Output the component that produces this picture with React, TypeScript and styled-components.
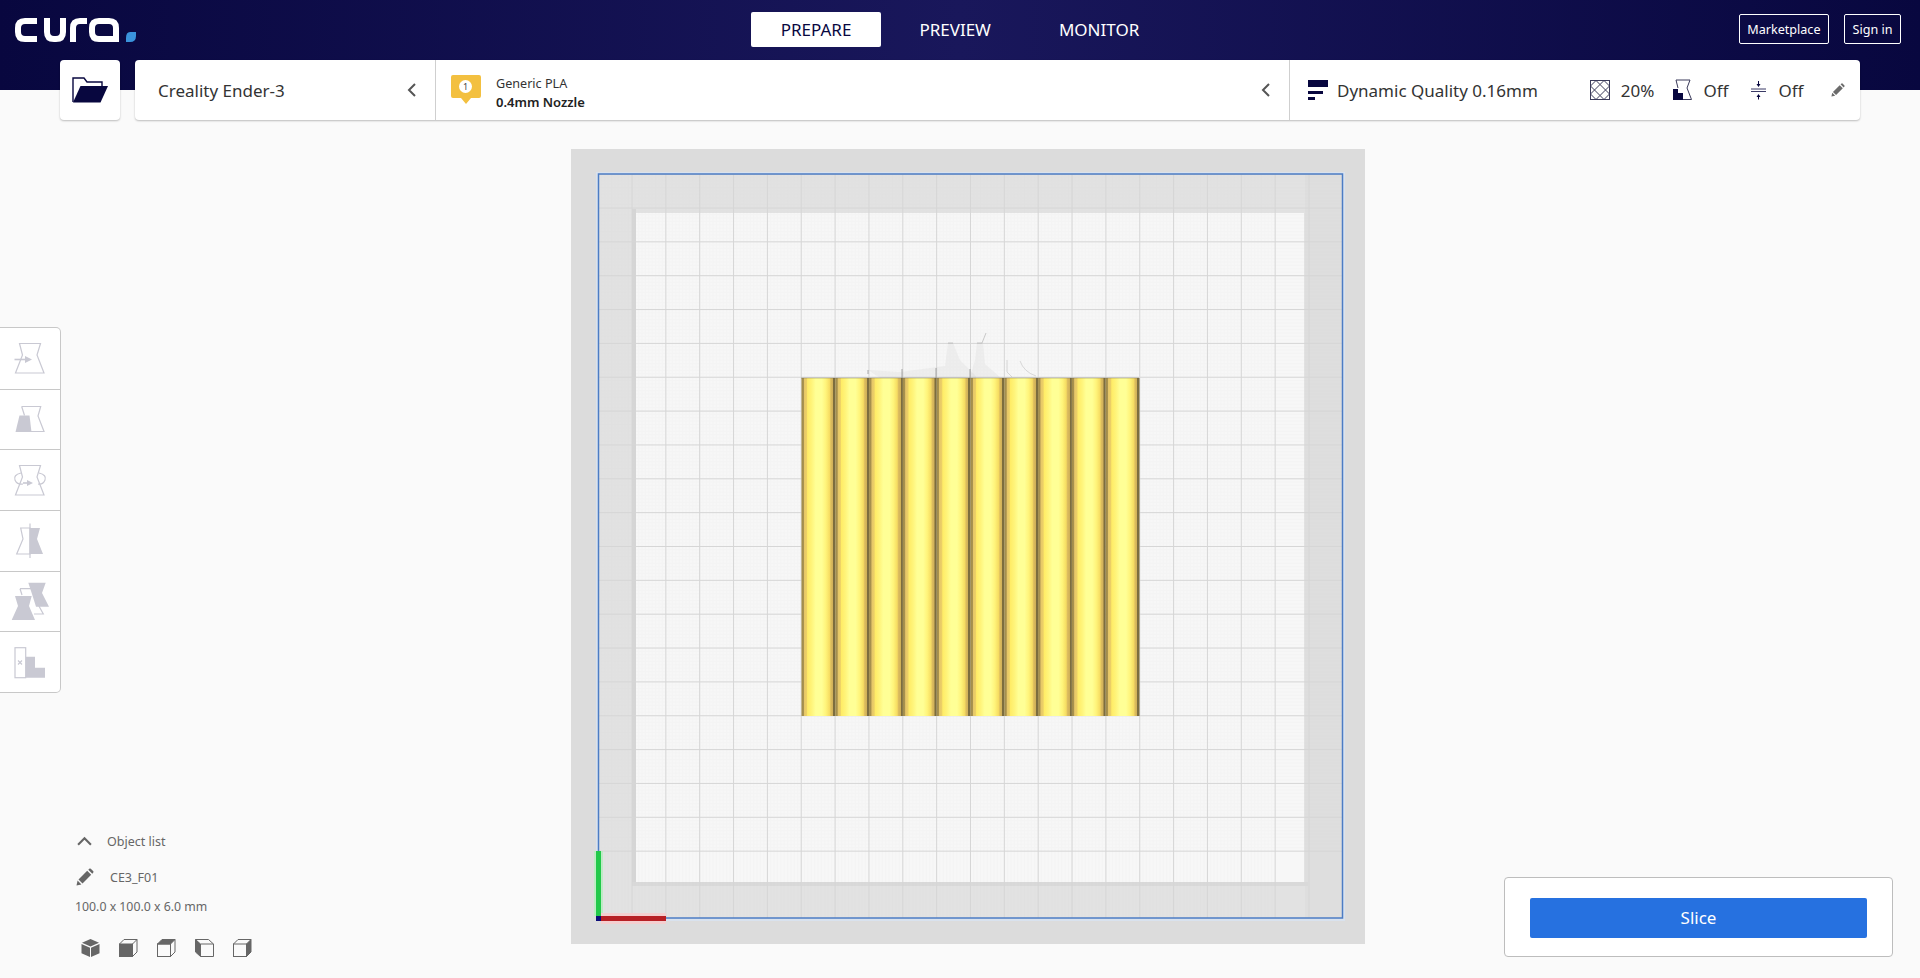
import React from 'react'
import styled, { createGlobalStyle } from 'styled-components'

const NAVY = '#08073f'
const TOOL = '#c9c9d3'
const CUBE = '#666666'

const GlobalStyle = createGlobalStyle`
    html, body { margin: 0; padding: 0; background: #fafafa; }
    body { font-family: "Noto Sans", "Open Sans", sans-serif; }
`

const Chevron: React.FC<{ up?: boolean; size?: number; color?: string }> = ({ up, size = 14, color = '#555' }) => (
    <svg width={size} height={size} viewBox="0 0 14 14" fill="none" stroke={color} strokeWidth="2">
        <path d={up ? 'M1 10 L7 4 L13 10' : 'M10 1 L4 7 L10 13'} />
    </svg>
)

const Pencil: React.FC<{ size: number; color: string }> = ({ size, color }) => (
    <svg width={size} height={size} viewBox="0 0 18 18" fill={color}>
        <path d="M0.5 17.5 L1.6 12.6 L5.4 16.4 Z" />
        <path d="M2.5 11.5 L11.2 2.8 L15.2 6.8 L6.5 15.5 Z" />
        <path d="M12.3 1.7 L13.6 0.6 Q14.2 0.2 14.8 0.7 L17.3 3.2 Q17.8 3.8 17.3 4.4 L16.3 5.7 Z" />
    </svg>
)

const Logo = () => (
    <svg width="121" height="24" viewBox="0 0 121 24" fill="none" stroke="#fff" strokeWidth="6">
        <path d="M22 3 H10 Q3 3 3 10 V14 Q3 21 10 21 H22" />
        <path d="M32 0 V14 Q32 21 39 21 H41 Q48 21 48 14 V0" />
        <path d="M58 24 V10 Q58 3 65 3 H72" />
        <path d="M101 24 V10 Q101 3 94 3 H84 Q77 3 77 10 V14 Q77 21 84 21 H101" />
        <path d="M115 14 H121 V18 Q121 24 115 24 H111 V20 Q111 14 115 14 Z" fill="#3a93dc" stroke="none" />
    </svg>
)

const Folder = () => (
    <svg width="36" height="26" viewBox="0 0 36 26" fill="none">
        <path d="M1 25 V1 H12 L15 5 H30 V9" stroke={NAVY} strokeWidth="1.4" />
        <path d="M1 25.500 L8.500 9 H36 L28.500 25.500 Z" fill={NAVY} />
    </svg>
)

const Badge = () => (
    <svg width="30" height="30" viewBox="0 0 30 30">
        <path d="M2 0 H28 Q30 0 30 2 V21 Q30 23 28 23 H20 L15 29 L10 23 H2 Q0 23 0 21 V2 Q0 0 2 0 Z" fill="#f3c040" />
        <circle cx="14.500" cy="11.500" r="6.500" fill="#fff" />
        <text x="14.500" y="14.800" textAnchor="middle" fontSize="9" fontFamily="Noto Sans" fill="#444">1</text>
    </svg>
)

const QualityIcon = () => (
    <svg width="20" height="20" viewBox="0 0 20 20" fill={NAVY}>
        <rect x="0" y="0" width="20" height="7" />
        <rect x="0" y="11" width="15" height="3" />
        <rect x="0" y="17" width="7" height="3" />
    </svg>
)

const InfillIcon = () => (
    <svg width="20" height="20" viewBox="0 0 20 20" fill="none" stroke="#3a3a5a" strokeWidth="1">
        <rect x="0.500" y="0.500" width="19" height="19" />
        <path d="M0.500 6 L6 0.500 L10 4.500 L14 0.500 L19.500 6 L15.500 10 L19.500 14 L14 19.500 L10 15.500 L6 19.500 L0.500 14 L4.500 10 Z M10 4.500 L15.500 10 L10 15.500 L4.500 10 Z" />
    </svg>
)

const SupportIcon = () => (
    <svg width="20" height="22" viewBox="0 0 20 22">
        <path d="M4 1 H18 L15 9 L19.500 20.500 H11" fill="none" stroke="#3a3a5a" strokeWidth="1" />
        <path d="M1 10 H6 V14 H11 V21 H1 Z" fill={NAVY} />
        <path d="M4 1 L6 9" stroke="#3a3a5a" strokeWidth="1" />
    </svg>
)

const AdhesionIcon = () => (
    <svg width="17" height="20" viewBox="0 0 17 20" fill={NAVY} stroke={NAVY}>
        <path d="M1 9 H16 M1 11.500 H16" fill="none" strokeWidth="0.800" />
        <path d="M8.500 1 V5 M8.500 15.500 V19.500" fill="none" strokeWidth="1" />
        <path d="M6.500 4 H10.500 L8.500 7 Z M6.500 17 H10.500 L8.500 14 Z" stroke="none" />
    </svg>
)

const ToolSvg: React.FC<{ children: React.ReactNode }> = ({ children }) => (
    <svg width="40" height="40" viewBox="0 0 40 40" fill="none" stroke={TOOL} strokeWidth="1.2">
        {children}
    </svg>
)

const toolIcons = [
    <ToolSvg key="move">
        <path d="M9.500 5.500 H30.500 L27 17 L34 35 H5.500 L12.500 17 Z" />
        <path d="M4.500 21.500 H16" strokeWidth="1.600" />
        <path d="M15 18 L22 21.500 L15 25 Z" fill={TOOL} stroke="none" />
    </ToolSvg>,
    <ToolSvg key="scale">
        <path d="M11.700 7.500 H30.700 L28 17 L34 32.500 H21" />
        <path d="M11.700 7.500 L14.500 16.500" />
        <path d="M9.500 16.500 H19.500 L21.500 33 H5.500 Z" fill={TOOL} stroke="none" />
    </ToolSvg>,
    <ToolSvg key="rotate">
        <path d="M9.500 5.500 H30.500 L27 17 L34 35 H5.500 L12.500 17 Z" />
        <path d="M11 13 Q3 15 5 20 Q7 25 13 24 M29 13 Q37 15 35 20 Q33 25 28 24" />
        <path d="M13 23 H18" strokeWidth="1.600" />
        <path d="M17 20 L23 23 L17 26 Z" fill={TOOL} stroke="none" />
    </ToolSvg>,
    <ToolSvg key="mirror">
        <path d="M10.700 7 H20 V33 H6.700 L13 18 Z" />
        <path d="M20 7 H30 L27 18 L33 33 H20 Z" fill={TOOL} stroke="none" />
        <path d="M20 2.500 V37" />
    </ToolSvg>,
    <ToolSvg key="per-model">
        <path d="M18.300 1.700 H35.700 L32 12 L39 25.700 H26 L22 13 Z" fill={TOOL} stroke="none" />
        <path d="M10 7.700 H27.300 L25 18 L33.300 33 H24 M10 7.700 L12 14" />
        <path d="M5 15 H21.700 L19 25 L25 39 H1.700 L8 25 Z" fill={TOOL} stroke="none" />
    </ToolSvg>,
    <ToolSvg key="blocker">
        <rect x="5" y="5.700" width="10.700" height="30" />
        <path d="M15.700 14.700 H25 V25.700 H35 V35.700 H15.700 Z" fill={TOOL} stroke="none" />
        <path d="M8 18.500 L12 22.500 M12 18.500 L8 22.500" />
    </ToolSvg>,
]

const CubeBase: React.FC<{ children?: React.ReactNode }> = ({ children }) => (
    <svg width="19" height="18" viewBox="0 0 19 18" fill="none" stroke={CUBE} strokeWidth="1">
        {children}
    </svg>
)

const cubeIcons = [
    <svg key="3d" width="19" height="18" viewBox="0 0 19 18" fill={CUBE}>
        <path d="M9.500 0 L18 3.800 L9.500 7.500 L1 3.800 Z" />
        <path d="M0.500 5 L9 8.700 V18 L0.500 14.300 Z" />
        <path d="M18.500 5 L10 8.700 V18 L18.500 14.300 Z" />
    </svg>,
    <CubeBase key="front">
        <rect x="0.500" y="5" width="13" height="12.500" fill={CUBE} />
        <path d="M0.500 5 L5 0.500 H18 V13 L13.500 17.500 M13.500 5 L18 0.500" />
    </CubeBase>,
    <CubeBase key="top">
        <path d="M0.500 5 L5 0.500 H18 L13.500 5 Z" fill={CUBE} />
        <rect x="0.500" y="5" width="13" height="12.500" />
        <path d="M18 0.500 V13 L13.500 17.500" />
    </CubeBase>,
    <CubeBase key="left">
        <path d="M0.500 0.500 L5.500 5 V17.500 L0.500 13 Z" fill={CUBE} />
        <path d="M0.500 0.500 H13.500 L18.500 5 V17.500 H5.500 M5.500 5 H18.500" />
    </CubeBase>,
    <CubeBase key="right">
        <path d="M13.500 5 L18 0.500 V13 L13.500 17.500 Z" fill={CUBE} />
        <rect x="0.500" y="5" width="13" height="12.500" />
        <path d="M0.500 5 L5 0.500 H18" />
    </CubeBase>,
]

// plate drawn in page-relative coordinates, the svg sits at 571,149
const STEP = 33.85
const coarseX = Array.from({ length: 22 }, (_, i) => 632 + (i - 1) * STEP)
const coarseY = Array.from({ length: 21 }, (_, i) => 208 + (i - 1) * STEP)
const fineLines = Array.from({ length: 200 }, (_, i) => i * (STEP / 10))
const cylinders = Array.from({ length: 10 }, (_, i) => 801.5 + i * 33.8)

const BuildPlate = () => (
    <svg width="794" height="795" viewBox="571 149 794 795">
        <defs>
            <linearGradient id="cyl" x1="0" x2="1" y1="0" y2="0">
                <stop offset="0" stopColor="#a08b48" />
                <stop offset="0.06" stopColor="#a89250" />
                <stop offset="0.08" stopColor="#e6c668" />
                <stop offset="0.15" stopColor="#ecd066" />
                <stop offset="0.18" stopColor="#ffec66" />
                <stop offset="0.3" stopColor="#fff47a" />
                <stop offset="0.42" stopColor="#ffff96" />
                <stop offset="0.6" stopColor="#ffff96" />
                <stop offset="0.72" stopColor="#fff47a" />
                <stop offset="0.83" stopColor="#f6dc62" />
                <stop offset="0.87" stopColor="#dcbc5e" />
                <stop offset="0.93" stopColor="#d0b058" />
                <stop offset="0.94" stopColor="#7c6d3e" />
                <stop offset="1" stopColor="#7c6d3e" />
            </linearGradient>
            <clipPath id="frame"><rect x="598" y="174" width="744" height="744" /></clipPath>
        </defs>
        <rect x="571" y="149" width="794" height="795" fill="#dcdcdc" />
        <rect x="596" y="172" width="749" height="749" fill="#d9e2ee" />
        <rect x="598" y="174" width="744" height="744" fill="#e2e2e2" />
        <rect x="1305" y="174" width="37" height="744" fill="#dedede" />
        <rect x="636" y="213" width="668" height="669" fill="#f7f7f7" />
        <rect x="632" y="209" width="4" height="677" fill="#d6d6d6" />
        <rect x="632" y="882" width="676" height="4" fill="#d9d9d9" />
        <g clipPath="url(#frame)" stroke="#d4d4d4" strokeWidth="1" opacity="0.07">
            {fineLines.map(d => <line key={`fx${d}`} x1={598 + d} x2={598 + d} y1="174" y2="918" />)}
            {fineLines.map(d => <line key={`fy${d}`} y1={174 + d} y2={174 + d} x1="598" x2="1342" />)}
        </g>
        <g clipPath="url(#frame)" stroke="#d6d6d6" strokeWidth="1">
            {coarseX.map(x => <line key={x} x1={x} x2={x} y1="174" y2="918" />)}
            {coarseY.map(y => <line key={y} y1={y} y2={y} x1="598" x2="1342" />)}
        </g>
        <g fill="#9a9a9a" fillOpacity="0.09">
            <path d="M948 343 H953 L960 360 L976 376 V378 H880 L868 370 L900 372 L945 366 Z" />
            <path d="M977 343 H983 L985 364 L1000 377 H970 L975 360 Z" />
        </g>
        <g fill="none" stroke="#b5b5b5" strokeWidth="0.7">
            <path d="M948 343 H953 M977 343 H982 M982 343 L986 333" />
            <path d="M1007 360 V372 L1012 377 M1020 361 Q1024 372 1036 376" opacity="0.7" />
            <path d="M868 370 V374 M902 369 V378 M936 368 V378 M970 369 V378" stroke="#888" />
        </g>
        {cylinders.map(x => <rect key={x} x={x} y="378" width="33.800" height="338" fill="url(#cyl)" />)}
        <path d="M801 378 H1139" stroke="#6e6a55" strokeWidth="0.8" opacity="0.5" />
        <rect x="598.500" y="174" width="744" height="744" fill="none" stroke="#4c7cc4" strokeWidth="1.500" />
        <rect x="594" y="851" width="9" height="65" fill="#bdebc4" />
        <rect x="601" y="913" width="65" height="11" fill="#f4cfd0" />
        <rect x="596" y="851" width="5" height="65" fill="#22c94a" />
        <rect x="601" y="916" width="65" height="5" fill="#b72025" />
        <rect x="596" y="916" width="5" height="5" fill="#0b0b78" />
    </svg>
)

const App: React.FC = () => (
    <Page>
        <GlobalStyle />
        <Header>
            <LogoSlot><Logo /></LogoSlot>
            <Tabs>
                <Tab $active>PREPARE</Tab>
                <Tab>PREVIEW</Tab>
                <Tab>MONITOR</Tab>
            </Tabs>
            <AccountActions>
                <OutlineButton>Marketplace</OutlineButton>
                <OutlineButton>Sign in</OutlineButton>
            </AccountActions>
        </Header>
        <Toolbar>
            <OpenButton><Folder /></OpenButton>
            <Stage>
                <PrinterSection>
                    <PrinterName>Creality Ender-3</PrinterName>
                    <Chevron />
                </PrinterSection>
                <MaterialSection>
                    <Badge />
                    <MaterialText>
                        <span>Generic PLA</span>
                        <strong>0.4mm Nozzle</strong>
                    </MaterialText>
                    <ChevronEnd><Chevron /></ChevronEnd>
                </MaterialSection>
                <PrintSetup>
                    <QualityIcon />
                    <QualityLabel>Dynamic Quality 0.16mm</QualityLabel>
                    <SetupItem $left={52} $gap={11}><InfillIcon />20%</SetupItem>
                    <SetupItem $left={18} $gap={11}><SupportIcon />Off</SetupItem>
                    <SetupItem $left={22} $gap={11}><AdhesionIcon />Off</SetupItem>
                    <EditSlot><Pencil size={14} color="#6b6b6b" /></EditSlot>
                </PrintSetup>
            </Stage>
        </Toolbar>
        <Workspace>
            <LeftColumn>
                <ToolPanel>
                    {toolIcons.map((icon, i) => <ToolCell key={i}>{icon}</ToolCell>)}
                </ToolPanel>
                <ObjectPanel>
                    <ObjectTitle>
                        <Chevron up size={15} color="#666" />
                        <span>Object list</span>
                    </ObjectTitle>
                    <ObjectRow>
                        <Pencil size={18} color="#666" />
                        <span>CE3_F01</span>
                    </ObjectRow>
                    <Dimensions>100.0 x 100.0 x 6.0 mm</Dimensions>
                    <ViewButtons>{cubeIcons}</ViewButtons>
                </ObjectPanel>
            </LeftColumn>
            <PlateColumn><BuildPlate /></PlateColumn>
            <RightColumn>
                <SlicePanel>
                    <SliceButton>Slice</SliceButton>
                </SlicePanel>
            </RightColumn>
        </Workspace>
    </Page>
)

export default App

const Page = styled.div`
    width: 1920px;
    height: 978px;
    overflow: hidden;
    background: #fafafa;
`

const Header = styled.header`
    height: 90px;
    padding-bottom: 32px;
    box-sizing: border-box;
    display: grid;
    grid-template-columns: 1fr auto 1fr;
    align-items: center;
    background: linear-gradient(90deg, #08073f 0%, #19175b 50%, #08073f 100%);
`

const LogoSlot = styled.div`
    display: flex;
    padding-left: 15px;
    padding-top: 2px;
`

const Tabs = styled.nav`
    display: flex;
    gap: 8px;
`

const Tab = styled.div<{ $active?: boolean }>`
    height: 35px;
    padding: 0 30px;
    display: flex;
    align-items: center;
    font-size: 17px;
    border-radius: 2px;
    color: ${p => (p.$active ? NAVY : '#ffffff')};
    background: ${p => (p.$active ? '#ffffff' : 'transparent')};
`

const AccountActions = styled.div`
    display: flex;
    justify-content: flex-end;
    gap: 15px;
    padding-right: 19px;
`

const OutlineButton = styled.div`
    height: 30px;
    box-sizing: border-box;
    padding: 0 7.5px;
    display: flex;
    align-items: center;
    font-size: 12.6px;
    color: #fff;
    border: 1px solid #fff;
    border-radius: 2px;
`

const Toolbar = styled.div`
    height: 60px;
    margin-top: -30px;
    padding-left: 60px;
    display: flex;
    gap: 15px;
`

const OpenButton = styled.div`
    width: 60px;
    height: 60px;
    display: flex;
    align-items: center;
    justify-content: center;
    background: #fff;
    border-radius: 4px;
    box-shadow: 0 1px 2px rgba(0, 0, 0, 0.25);
`

const Stage = styled.div`
    width: 1725px;
    height: 60px;
    display: flex;
    background: #fff;
    border-radius: 4px;
    box-shadow: 0 1px 2px rgba(0, 0, 0, 0.25);
`

const PrinterSection = styled.div`
    width: 301px;
    box-sizing: border-box;
    padding: 0 16px 0 23px;
    display: flex;
    align-items: center;
    justify-content: space-between;
    border-right: 1px solid #cfcfcf;
`

const PrinterName = styled.span`
    font-size: 17px;
    color: #333;
`

const MaterialSection = styled.div`
    width: 854px;
    box-sizing: border-box;
    padding: 0 16px 0 15px;
    display: flex;
    align-items: center;
    gap: 15px;
    border-right: 1px solid #cfcfcf;
`

const MaterialText = styled.div`
    display: flex;
    flex-direction: column;
    margin-top: 5px;
    font-size: 12.6px;
    line-height: 18px;
    color: #333;
    strong { font-size: 13px; font-weight: 600; color: #222; }
`

const ChevronEnd = styled.div`
    margin-left: auto;
    display: flex;
`

const PrintSetup = styled.div`
    flex: 1;
    padding-left: 18px;
    display: flex;
    align-items: center;
    font-size: 17px;
    color: #333;
`

const QualityLabel = styled.span`
    margin-left: 9px;
    white-space: nowrap;
`

const SetupItem = styled.div<{ $left: number; $gap: number }>`
    margin-left: ${p => p.$left}px;
    display: flex;
    align-items: center;
    gap: ${p => p.$gap}px;
`

const EditSlot = styled.div`
    margin-left: 28px;
    display: flex;
`

const Workspace = styled.main`
    height: 858px;
    display: grid;
    grid-template-columns: 571px 794px 1fr;
`

const LeftColumn = styled.div`
    display: flex;
    flex-direction: column;
    padding-top: 207px;
    box-sizing: border-box;
`

const ToolPanel = styled.div`
    width: 61px;
    height: 366px;
    box-sizing: border-box;
    display: grid;
    grid-template-rows: repeat(6, 1fr);
    background: #fff;
    border: 1px solid #c8c8c8;
    border-left: none;
    border-radius: 0 5px 5px 0;
`

const ToolCell = styled.div`
    box-sizing: border-box;
    display: flex;
    align-items: center;
    justify-content: center;
    & + & { border-top: 1px solid #c8c8c8; }
`

const ObjectPanel = styled.div`
    margin-top: auto;
    padding: 0 0 21px 75px;
    display: flex;
    flex-direction: column;
    font-size: 12.5px;
    color: #666;
`

const ObjectTitle = styled.div`
    height: 20px;
    padding-left: 2px;
    display: flex;
    align-items: center;
    gap: 15px;
`

const ObjectRow = styled.div`
    height: 20px;
    margin-top: 16px;
    padding-left: 1px;
    display: flex;
    align-items: center;
    gap: 16px;
`

const Dimensions = styled.div`
    height: 20px;
    margin-top: 10px;
    font-size: 12.3px;
    line-height: 20px;
`

const ViewButtons = styled.div`
    margin-top: 22px;
    padding-left: 6px;
    display: flex;
    gap: 19px;
`

const PlateColumn = styled.div`
    padding-top: 29px;
    svg { display: block; }
`

const RightColumn = styled.div`
    display: flex;
    justify-content: flex-end;
    align-items: flex-end;
    padding: 0 27px 21px 0;
`

const SlicePanel = styled.div`
    width: 389px;
    height: 80px;
    box-sizing: border-box;
    padding: 20px 25px;
    background: #fff;
    border: 1px solid #bdbdbd;
    border-radius: 4px;
`

const SliceButton = styled.div`
    height: 40px;
    padding-bottom: 2px;
    box-sizing: border-box;
    display: flex;
    align-items: center;
    justify-content: center;
    font-size: 17px;
    color: #fff;
    background: #2671e0;
    border-radius: 2px;
`
